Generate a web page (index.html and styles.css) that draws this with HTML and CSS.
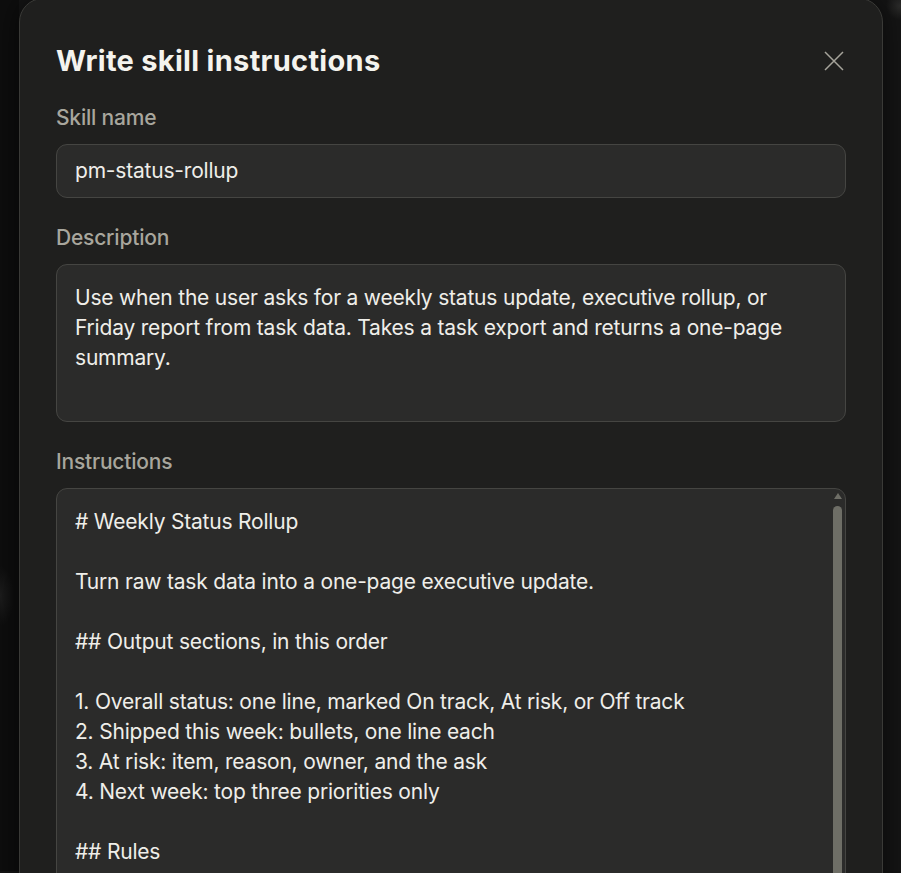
FILE: index.html
```html
<!DOCTYPE html>
<html>
<head>
<meta charset="utf-8">
<title>Write skill instructions</title>
<link rel="stylesheet" href="styles.css">
</head>
<body>
<div class="backdrop">
  <div class="modal">
    <div class="modal-head">
      <h2 class="modal-title">Write skill instructions</h2>
      <button class="close" aria-label="Close">
        <svg width="20" height="20" viewBox="0 0 20 20"><path d="M1 1L19 19M19 1L1 19" stroke="currentColor" stroke-width="1.5" fill="none"/></svg>
      </button>
    </div>

    <div class="field first">
      <div class="label">Skill name</div>
      <div class="input">pm-status-rollup</div>
    </div>

    <div class="field">
      <div class="label">Description</div>
      <div class="input area desc">Use when the user asks for a weekly status update, executive rollup, or Friday report from task data. Takes a task export and returns a one-page summary.</div>
    </div>

    <div class="field">
      <div class="label">Instructions</div>
      <div class="input area instr"><div class="text"># Weekly Status Rollup

Turn raw task data into a one-page executive update.

## Output sections, in this order

1. Overall status: one line, marked On track, At risk, or Off track
2. Shipped this week: bullets, one line each
3. At risk: item, reason, owner, and the ask
4. Next week: top three priorities only

## Rules</div>
        <div class="scrollbar"><span class="arrow"></span><span class="thumb"></span></div>
      </div>
    </div>
  </div>
</div>
</body>
</html>
```

FILE: styles.css
```css
/* dialog: write skill instructions */

html, body
{ margin: 0;
  height: 100%;
  overflow: hidden;
  background: #141414;
}

body
{ font-family: Inter, "Noto Sans", sans-serif;
  color: #ecebe6;
}

.backdrop
{ height: 100%;
  background:
    radial-gradient(circle at 900px 8px, #2c2c2b 0, rgba(21,21,21,0) 14px),
    radial-gradient(ellipse 14px 30px at 0 598px, #1d1d1d 0, rgba(14,14,14,0) 100%),
    linear-gradient(to right, #0e0e0e 0, #0e0e0e 19px, #151515 19px);
}

.modal
{ margin-left: 19px;
  margin-top: -2px;
  width: 864px;
  height: 1000px;
  box-sizing: border-box;
  background: #1f1f1e;
  border: 1px solid #3a3a37;
  border-radius: 24px;
  padding: 0 36px;
  box-shadow: 0 0 30px rgba(0,0,0,0.6);
}

.modal-head
{ display: flex;
  align-items: center;
  justify-content: space-between;
  padding-top: 44px;
  height: 36px;
}

.modal-title
{ margin: 0;
  font-size: 29px;
  line-height: 36px;
  font-weight: 700;
  color: #f4f3ee;
  letter-spacing: 0.3px;
}

.close
{ background: none;
  border: 0;
  padding: 0;
  margin-right: 2px;
  color: #a6a49b;
  width: 20px;
  height: 20px;
  display: flex;
}

.field
{ margin-top: 27px;
}

.field.first
{ margin-top: 26px;
}

.label
{ font-size: 21px;
  line-height: 26px;
  font-weight: 500;
  letter-spacing: -0.2px;
  color: #a8a69d;
  margin-bottom: 13px;
}

.input
{ background: #2b2b2a;
  border: 1px solid #454542;
  border-radius: 11px;
  height: 52px;
  padding: 0 18px;
  font-size: 21px;
  letter-spacing: -0.2px;
  line-height: 52px;
  color: #efeee9;
}

.area
{ height: 120px;
  line-height: 30px;
  padding: 18px 18px;
}

.instr
{ position: relative;
  height: 600px;
  padding-right: 30px;
}

.instr .text
{ white-space: pre-wrap;
}

.scrollbar
{ position: absolute;
  top: 4px;
  right: 3px;
  width: 9px;
  bottom: 0;
}

.scrollbar .arrow
{ display: block;
  margin: 0 auto;
  width: 0;
  height: 0;
  border-left: 4.5px solid transparent;
  border-right: 4.5px solid transparent;
  border-bottom: 6px solid #6e6e66;
}

.scrollbar .thumb
{ display: block;
  margin-top: 7px;
  height: 500px;
  background: #6e6e66;
  border-radius: 5px 5px 0 0;
}
```
